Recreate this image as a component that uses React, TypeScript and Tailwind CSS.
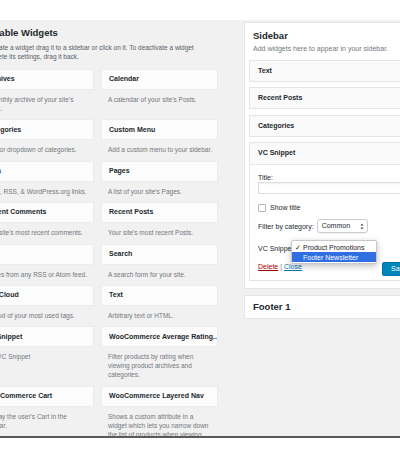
type Widget = { title: string; desc: string[] }

const available: Widget[] = [
  { title: 'Archives', desc: ["A monthly archive of your site's", 'Posts.'] },
  { title: 'Calendar', desc: ["A calendar of your site's Posts."] },
  { title: 'Categories', desc: ['A list or dropdown of categories.'] },
  { title: 'Custom Menu', desc: ['Add a custom menu to your sidebar.'] },
  { title: 'Meta', desc: ['Login, RSS, & WordPress.org links.'] },
  { title: 'Pages', desc: ["A list of your site's Pages."] },
  { title: 'Recent Comments', desc: ["Your site's most recent comments."] },
  { title: 'Recent Posts', desc: ["Your site's most recent Posts."] },
  { title: 'RSS', desc: ['Entries from any RSS or Atom feed.'] },
  { title: 'Search', desc: ['A search form for your site.'] },
  { title: 'Tag Cloud', desc: ['A cloud of your most used tags.'] },
  { title: 'Text', desc: ['Arbitrary text or HTML.'] },
  { title: 'VC Snippet', desc: ['Add VC Snippet'] },
  {
    title: 'WooCommerce Average Rating...',
    desc: ['Filter products by rating when', 'viewing product archives and', 'categories.'],
  },
  { title: 'WooCommerce Cart', desc: ["Display the user's Cart in the", 'sidebar.'] },
  {
    title: 'WooCommerce Layered Nav',
    desc: ['Shows a custom attribute in a', 'widget which lets you narrow down', 'the list of products when viewing'],
  },
]

function WidgetCard({ widget }: { widget: Widget }) {
  return (
    <div className="flex flex-col">
      <div className="h-[21px] flex items-center px-[7px] bg-[#fcfcfc] border border-[#ececec] text-[7px] font-bold text-[#23282d] whitespace-nowrap overflow-hidden">
        {widget.title}
      </div>
      <div className="mt-[5px] mb-[6.4px] px-[7px] text-[6.5px] leading-[9px] text-[#72777c] whitespace-nowrap">
        {widget.desc.map((line) => (
          <div key={line}>{line}</div>
        ))}
      </div>
    </div>
  )
}

function SidebarItem({ title }: { title: string }) {
  return (
    <div className="h-[22px] mb-[5.4px] flex items-center px-[8px] bg-[#fafafa] border border-[#e5e5e5] text-[7px] font-bold text-[#23282d]">
      {title}
    </div>
  )
}

export default function App() {
  return (
    <div
      className="w-[400px] h-[457px] overflow-hidden bg-white flex flex-col"
      style={{ fontFamily: '"Liberation Sans", Arial, sans-serif' }}
    >
      <div className="h-[20px] shrink-0" />
      <div className="h-[416px] shrink-0 bg-[#f1f1f1] flex items-start overflow-hidden">
        {/* available widgets */}
        <div className="ml-[-24px] w-[242px] shrink-0 pt-[7px]">
          <h2 className="px-[1px] text-[9.5px] leading-[12px] font-semibold text-[#23282d] whitespace-nowrap">
            Available Widgets
          </h2>
          <div className="mt-[3.5px] pl-[1px] text-[6.5px] leading-[9px] text-[#555d66] whitespace-nowrap">
            <div>To activate a widget drag it to a sidebar or click on it. To deactivate a widget</div>
            <div>and delete its settings, drag it back.</div>
          </div>
          <div className="mt-[8.5px] grid grid-cols-2 gap-x-[7px] pl-[1px]">
            {available.map((w) => (
              <WidgetCard key={w.title} widget={w} />
            ))}
          </div>
        </div>

        {/* sidebars */}
        <div className="ml-[26px] w-[186px] shrink-0 pt-[2px] flex flex-col">
          <div className="bg-white border border-[#e5e5e5] px-[4px] pb-[7px]">
            <div className="px-[4px] pt-[7px]">
              <div className="text-[9.5px] leading-[12px] font-semibold text-[#23282d]">Sidebar</div>
              <div className="mt-[2px] text-[7px] leading-[10px] text-[#72777c] whitespace-nowrap">
                Add widgets here to appear in your sidebar.
              </div>
            </div>
            <div className="mt-[6px]">
              <SidebarItem title="Text" />
              <SidebarItem title="Recent Posts" />
              <SidebarItem title="Categories" />
              <div className="border border-[#e5e5e5] bg-white">
                <div className="h-[22px] flex items-center px-[8px] bg-[#fafafa] border-b border-[#e5e5e5] text-[7px] font-bold text-[#23282d]">
                  VC Snippet
                </div>
                <div className="px-[8px] pb-[4px] text-[7px] text-[#23282d]">
                  <div className="pt-[8px] leading-[9px]">Title:</div>
                  <div className="h-[12px] bg-white border border-[#ddd] shadow-[inset_0_1px_2px_rgba(0,0,0,0.07)]" />
                  <div className="mt-[9px] flex items-center gap-[4px]">
                    <span className="w-[8px] h-[8px] border border-[#b4b9be] bg-white rounded-[1px]" />
                    <span className="leading-[9px]">Show title</span>
                  </div>
                  <div className="mt-[7px] flex items-center gap-[3px]">
                    <span className="leading-[9px]">Filter by category:</span>
                    <span className="w-[51px] h-[14px] bg-white border border-[#ccc] rounded-[3px] flex items-center justify-between pl-[4px] pr-[3px] shadow-[0_1px_1px_rgba(0,0,0,0.05)]">
                      <span className="text-[7px] text-[#23282d]">Common</span>
                      <svg width="4" height="7" viewBox="0 0 4 7">
                        <path d="M0.5 2.5 L2 0.8 L3.5 2.5 Z M0.5 4.5 L2 6.2 L3.5 4.5 Z" fill="#333" />
                      </svg>
                    </span>
                  </div>
                  <div className="relative mt-[10.5px] leading-[9px]">
                    <span>VC Snippet</span>
                    <div className="absolute left-[33px] top-[-3.5px] w-[86px] bg-white border border-[#c8c8c8] rounded-[2px] shadow-[0_2px_6px_rgba(0,0,0,0.25)] py-[1px] z-10 whitespace-nowrap">
                      <div className="h-[10px] flex items-center text-[7px] text-[#222]">
                        <span className="w-[11px] text-center text-[6.5px]">✓</span>
                        <span>Product Promotions</span>
                      </div>
                      <div className="h-[10px] flex items-center text-[7px] text-white bg-[#2f6fe2]">
                        <span className="w-[11px]" />
                        <span>Footer Newsletter</span>
                      </div>
                    </div>
                  </div>
                  <div className="mt-[9px] flex items-start justify-between">
                    <div className="leading-[9px]">
                      <span className="text-[#a00] underline">Delete</span>
                      <span className="text-[#72777c]"> | </span>
                      <span className="text-[#0073aa] underline">Close</span>
                    </div>
                    <span className="mt-[0.5px] h-[14px] px-[8px] flex items-center bg-[#0085ba] border border-[#0073aa] rounded-[2px] text-white text-[7px]">
                      Save
                    </span>
                  </div>
                </div>
              </div>
            </div>
          </div>
          <div className="mt-[6px] h-[24px] bg-white border border-[#e5e5e5] flex items-center px-[8px] text-[9.5px] font-semibold text-[#23282d]">
            Footer 1
          </div>
        </div>
      </div>
      <div className="h-[2px] shrink-0 bg-[#5a5a5a]" />
    </div>
  )
}
